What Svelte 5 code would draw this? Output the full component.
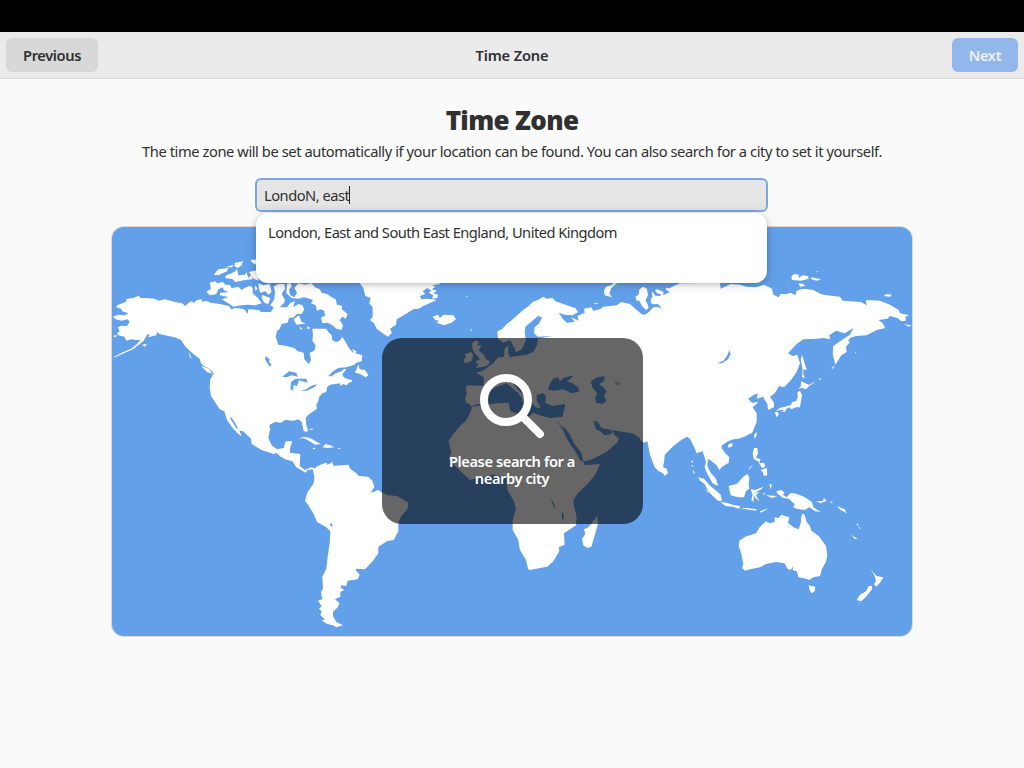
<script>
  let query = $state('LondoN, east');
  const results = ['London, East and South East England, United Kingdom'];

  // Coastlines, grouped by map sheet. Each sheet has its own origin at three units per pixel.
  const sheets = [
    {
      x: -7, y: -7,
      land: [
        'M26 411L50 398 78 386 96 372 106 360 96 360 78 358 64 362 58 350 40 346 36 340 44 334 38 322 50 317 66 318 74 306 68 298 50 302 32 298 24 290 40 284 60 286 70 280 52 274 48 266 34 262 36 256 52 250 62 246 66 236 86 234 100 227 108 234 124 234 150 236 160 242 180 238 210 246 232 250 240 258 254 246 262 244 264 250 276 240 290 238 292 246 302 242 318 248 344 252 372 258 378 268 392 264 412 266 420 270 428 282 430 268 462 270 468 276 498 276 506 262 496 256 508 238 510 214 506 200 520 192 538 192 540 206 530 222 540 240 538 248 524 262 546 262 556 248 570 244 564 262 580 252 592 256 598 268 590 282 576 282 566 292 552 294 548 308 530 312 524 326 516 334 512 350 520 374 544 378 568 384 578 394 596 398 598 418 612 432 618 420 614 398 628 392 632 376 622 362 624 346 622 326 640 326 664 326 670 336 680 346 682 360 692 366 704 362 712 350 724 370 732 384 744 398 760 402 772 406 770 424 754 428 748 434 724 442 700 444 684 454 668 470 690 458 712 448 724 448 712 462 716 472 730 478 740 480 740 486 718 490 706 498 704 490 676 494 666 502 664 516 652 520 642 532 640 544 634 554 636 566 610 584 602 594 604 616 610 632 596 632 590 606 580 598 564 602 540 600 528 608 510 606 494 614 492 632 402 632 392 612 378 590 376 596 386 612 398 632 390 632 380 620 366 600 358 574 344 568 330 546 318 528 314 500 316 478 326 460 314 446 296 438 288 430 284 416 270 406 254 392 240 378 228 360 210 352 190 348 164 342 156 336 154 346 130 352 134 342 126 344 116 362 104 372 84 388 60 398 30 412Z',
        'M314 188L330 184 338 190 354 186 360 194 366 196 340 208 334 222 316 226 304 216 318 206Z',
        'M350 193L375 195 380 205 400 200 410 210 420 203 435 197 443 203 443 220 460 235 470 250 450 256 430 254 410 256 385 260 370 250 350 238 370 231 344 226 346 218 370 217 356 210Z',
        'M326 164L340 148 370 144 366 154 340 166ZM362 142L384 134 382 142ZM390 128L414 124 410 136 398 144 388 138ZM364 166L388 156 396 148 400 166 420 164 424 156 430 174 440 164 442 178 420 180 390 186 384 178 360 174ZM436 120L456 118 456 134 444 130ZM432 156L460 150 460 182 446 176Z',
        'M460 190L474 196 494 192 500 216 490 224 482 214 466 218 462 206ZM450 196L458 206 450 212ZM470 224L496 234 490 252 478 248 472 238Z',
        'M546 192L556 188 560 198 552 210 556 226 568 232 576 218 568 204 580 190 600 194 620 190 630 202 644 208 650 218 666 222 680 232 692 238 696 254 712 258 710 268 728 282 722 296 712 290 704 300 714 316 710 330 694 326 682 316 668 308 652 310 648 292 660 288 658 272 646 268 636 272 632 256 618 250 624 240 606 234 596 232 580 236 560 234 544 220Z',
        'M566 298L582 286 590 306 604 312 590 312 574 314ZM640 254L648 260 640 264ZM584 318L592 328 586 328ZM606 318L616 324 608 328ZM760 432L764 448 780 450 790 466 782 472 766 462 750 458 756 444ZM704 488L728 482 742 480 724 496ZM742 386L756 396 746 400ZM288 438L312 446 322 462 306 456ZM252 396L260 416 254 410ZM110 374L126 372 120 380ZM24 348L36 344 32 352ZM612 626L628 626 618 630Z'
      ],
      water: [
        'M532 470L552 454 574 458 578 470 560 466 544 472ZM558 486L572 476 604 476 608 488 592 484 582 480 576 498 566 496 564 512 556 508ZM588 512L604 508 618 498 636 492 630 500 606 512ZM482 408L494 418 492 426 500 434 494 440 480 418ZM674 466L690 454 716 446 710 454 692 460 678 470ZM680 332L706 330 708 344 692 362 682 356Z'
      ]
    },
    {
      x: -7, y: 203,
      land: [
        'M400 -6L414 4 438 26 440 42 470 60 506 72 514 68 524 78 540 88 562 94 574 112 588 120 602 128 608 120 622 118 628 130 636 116 618 112 600 120 584 108 586 72 554 68 556 52 562 34 542 34 536 54 516 58 500 46 490 24 496 -6ZM388 -6L396 8 410 20 404 4 396 -6ZM594 -6L600 6 608 4 606 -6Z',
        'M624 122L634 110 646 104 664 98 668 104 682 96 686 108 712 106 730 104 736 116 752 128 762 138 790 140 802 152 808 172 796 188 820 180 832 188 850 196 876 198 896 210 910 218 908 236 894 252 884 266 880 284 880 304 866 330 846 334 820 350 820 370 804 392 780 418 754 416 752 420 764 434 758 448 728 452 724 468 708 466 708 474 718 480 706 486 706 500 690 508 704 520 698 532 684 546 684 558 694 576 714 586 694 592 684 586 668 582 650 572 660 568 646 556 650 544 642 536 650 528 638 512 652 508 648 486 654 476 652 440 664 416 668 380 674 340 676 304 664 292 636 276 626 252 610 226 600 212 606 190 626 160 628 140Z',
        'M580 28L596 20 616 24 632 34 648 42 630 44 614 34 596 24ZM652 52L662 42 676 46 688 52 670 54ZM622 54L632 54 628 58ZM698 54L706 54 704 58Z'
      ],
      water: ['M674 282L680 280 684 290 678 288ZM802 186L812 176 810 184Z']
    },
    {
      x: 258, y: 43,
      land: [
        'M-38 30L-20 54 -14 78 2 84 -2 100 8 112 8 140 0 150 12 160 20 176 36 188 54 200 66 188 60 176 78 164 80 148 104 134 130 118 146 116 160 108 200 90 186 88 168 86 154 88 150 78 166 72 158 64 172 54 184 62 176 68 190 76 186 86 202 84 204 74 190 70 200 62 186 58 196 50 186 46 212 42 190 30Z',
        'M188 140L204 134 210 144 220 134 250 136 258 148 244 158 222 166 200 158 208 152 196 150Z',
        'M384 206L382 184 396 178 410 162 426 150 446 132 462 118 476 108 488 96 504 90 520 80 530 86 548 84 556 94 590 106 616 114 624 126 608 136 584 134 566 128 578 146 590 158 614 156 604 142 626 152 622 138 644 128 642 116 664 112 670 122 690 118 700 110 740 106 754 96 780 102 796 116 810 128 826 132 828 120 816 108 808 92 800 92 796 80 806 74 808 58 820 50 832 58 834 76 826 92 840 110 850 118 852 100 862 88 846 76 844 58 880 50 880 610 864 602 852 584 842 552 834 512 822 516 806 502 788 490 760 486 726 480 734 496 748 506 740 520 712 544 690 556 662 570 640 574 644 586 690 582 676 614 650 644 624 670 610 690 612 710 620 740 618 766 600 778 582 790 584 824 566 832 568 844 550 874 532 890 510 894 480 900 474 896 468 870 450 840 444 808 428 780 428 750 438 716 430 690 412 660 410 622 392 618 370 614 330 622 300 630 268 600 248 580 236 566 244 550 236 514 250 492 270 468 288 452 300 430 306 412 300 402 288 398 286 384 290 370 288 350 296 346 340 348 342 322 318 308 340 302 354 290 370 280 384 262 402 262 404 236 416 226 414 250 420 262 440 258 470 254 490 246 500 228 504 206 546 198 504 200 492 190 494 172 508 160 516 142 504 138 490 150 466 170 464 190 468 210 456 238 438 246 430 228 420 210 400 218Z',
        'M306 220L316 212 328 216 322 226 334 226 326 242 340 252 348 268 360 274 354 286 340 290 316 294 326 284 316 276 330 266 314 250 308 238ZM284 252L304 246 310 256 304 274 286 280 280 270 288 262ZM740 30L724 46 708 50 702 62 704 76 726 82 718 70 724 54 742 38ZM668 102L682 98 684 102ZM655 772L682 738 684 762 670 810 664 830 652 834 640 826 636 806 646 792 642 778ZM288 78L294 80 290 82ZM300 180L304 178 306 184Z'
      ],
      water: [
        'M308 406L330 402 348 392 356 368 376 352 398 344 410 340 424 352 444 368 456 384 456 396 468 384 440 354 430 342 440 338 468 364 482 392 496 412 512 414 500 392 500 374 520 370 528 378 526 398 548 408 586 402 578 440 540 444 516 438 490 428 474 442 450 434 420 422 416 398 380 400 340 406 308 410Z',
        'M534 360L540 340 550 326 564 322 570 334 580 324 610 316 600 328 590 334 608 340 624 352 628 364 606 370 592 364 578 358 554 362Z',
        'M662 336L676 324 702 318 704 332 688 342 700 352 710 364 702 376 710 394 696 402 678 398 676 382 682 370 668 354ZM738 332L744 346 736 342ZM746 332L750 342 746 344Z',
        'M562 452L572 466 586 476 600 494 612 520 634 548 640 576 630 570 616 544 602 524 590 504 578 478 564 458Z',
        'M670 452L684 456 694 474 724 480 726 492 704 496 690 484 678 478ZM544 684L550 700 558 716 552 712 546 700ZM576 722L582 738 580 752 576 744Z'
      ]
    },
    {
      x: 528, y: -7,
      land: [
        'M36 196L46 212 70 226 88 216 64 206 90 204 118 190 240 188 242 206 272 192 300 194 320 200 348 202 372 194 396 206 400 224 416 232 422 222 440 222 452 218 466 226 470 212 490 206 520 210 542 222 560 226 600 230 608 242 662 246 680 256 678 240 720 242 750 254 776 270 780 280 808 286 796 290 798 302 784 304 772 294 750 288 742 296 716 300 728 310 736 324 710 330 680 346 648 348 630 354 624 364 630 366 618 380 620 396 604 406 586 434 578 402 580 378 600 364 630 344 640 324 614 340 588 332 568 346 570 358 550 354 530 356 490 358 470 372 444 400 458 408 472 404 480 430 470 456 450 484 432 502 418 498 404 520 390 530 402 548 402 562 384 570 382 552 374 540 370 530 350 536 354 520 340 526 324 536 336 548 356 546 338 562 350 580 350 606 336 640 10 640 0 620 0 284 18 284 32 266 54 262 60 268 58 254 34 254 30 240 38 230 34 214Z',
        'M486 404L494 430 500 450 490 448 490 466 496 474 486 472 488 448 482 420ZM474 506L482 500 484 484 496 490 510 496 498 508 486 504ZM480 512L486 526 482 548 480 562 468 562 454 568 448 562 434 570 420 570 408 574 418 564 436 560 454 554 456 546 468 544 474 530 472 518ZM404 576L414 576 416 584 410 592ZM424 574L440 568 434 576Z',
        'M454 170L462 162 476 164 476 174 488 166 504 168 506 176 484 182 456 180ZM514 172L544 178 530 182 514 178ZM476 190L490 192 496 198 480 200ZM730 228L740 222 756 224 750 230ZM792 312L814 316 806 320ZM528 154L536 154 532 156ZM440 188L446 188 444 190ZM508 494L526 484 512 496ZM536 478L546 472 540 480ZM574 444L586 434 578 446ZM646 394L650 402 646 400Z'
      ],
      water: [
        'M232 430L250 422 262 406 268 390 272 402 264 418 246 430Z',
        'M22 187L120 187 114 192 78 200 76 208 90 218 66 214 52 208 44 210 52 220 66 224 56 229 44 226 38 214 34 226 32 248 38 253 54 252 66 266 54 262 40 260 34 268 24 278 14 284 0 282 14 274 26 264 22 250 25 225 20 200Z'
      ]
    },
    {
      x: 528, y: 203,
      land: [
        'M0 -6L340 -6 332 10 318 18 296 26 280 28 264 34 246 46 244 54 256 70 268 82 266 98 246 110 238 120 230 106 210 90 204 86 202 108 212 128 228 146 234 168 218 160 204 136 194 112 198 96 188 64 170 70 162 50 150 26 140 20 124 30 100 48 74 74 72 98 56 122 44 112 30 74 22 34 12 38 0 30Z',
        'M70 112L80 116 84 130 74 138 68 128ZM264 44L276 38 278 48 266 54ZM342 14L350 6 350 18 344 26Z',
        'M174 142L192 146 208 166 226 180 242 194 246 214 234 212 218 198 204 182 194 162 180 152ZM242 216L260 218 278 224 300 228 298 236 278 230 256 228ZM266 168L290 162 310 140 322 132 328 142 326 162 328 176 318 184 312 202 294 202 272 196ZM302 234L320 234 350 238 348 242 318 238ZM360 244L386 234 374 242 362 248Z',
        'M342 54L352 54 354 70 348 84 362 88 358 96 342 88 338 72ZM362 120L380 114 382 136 372 138 368 126ZM354 92L362 100 372 98 376 110 366 114 360 104ZM322 120L340 102 332 114ZM332 178L346 180 370 170 364 178 344 188 358 186 348 196 358 214 346 204 342 196 340 216 334 210 338 194ZM388 162L396 164 392 178 390 172ZM378 196L412 198 396 204ZM368 190L378 190 372 194Z',
        'M408 184L424 180 434 188 428 194 440 202 450 190 464 190 492 200 516 216 520 232 542 246 526 244 508 232 494 240 470 236 460 232 464 222 446 206 430 204 414 192ZM528 214L548 214 552 204 560 212 542 220ZM540 192L554 204 550 200ZM570 212L580 220 572 218ZM590 228L614 238 620 250 602 240ZM634 314L654 328 644 326ZM652 280L656 288 650 284ZM656 288L662 300 656 294ZM154 92L160 92 156 100ZM154 104L160 108 156 112ZM158 118L166 132 160 128ZM196 176L210 190 202 186Z',
        'M488 250L494 256 500 276 510 288 514 302 536 318 558 348 562 374 558 396 546 416 540 438 520 442 508 450 498 446 476 442 470 424 458 420 460 408 452 420 442 416 434 400 408 396 378 402 360 412 330 418 316 422 306 414 310 402 304 372 296 348 298 332 316 320 348 310 360 290 378 274 390 280 404 276 404 262 416 264 424 254 448 262 444 278 460 292 476 298 482 280 484 260ZM506 466L526 470 524 484 514 490 508 478ZM692 418L702 430 710 438 730 442 720 458 708 470 702 462 708 454 704 438ZM686 468L696 468 696 478 680 498 664 514 650 510 660 494 678 484ZM656 516L664 518 658 518Z'
      ],
      water: []
    }
  ];
</script>

<div class="screen">
  <div class="topbar"></div>
  <header>
    <button class="btn prev">Previous</button>
    <span class="title">Time Zone</span>
    <button class="btn next">Next</button>
  </header>
  <main>
    <h1>Time Zone</h1>
    <p class="desc">The time zone will be set automatically if your location can be found. You can also search for a city to set it yourself.</p>
    <div class="search">
      <div class="entry"><span>{query}</span><i class="caret"></i></div>
      <div class="popover">
        {#each results as r}
          <div class="result"><span>{r}</span></div>
        {/each}
      </div>
    </div>
    <div class="map">
      <svg class="world" viewBox="0 0 800 409" width="800" height="409">
        {#each sheets as s}
          <g transform="translate({s.x} {s.y}) scale(0.333333)">
            {#each s.land as d}<path class="land" {d} />{/each}
            {#each s.water as d}<path class="water" {d} />{/each}
          </g>
        {/each}
      </svg>
      <div class="hint">
        <svg width="66" height="66" viewBox="0 0 66 66">
          <circle cx="27" cy="27" r="22" />
          <path d="M44 44L61 61" />
        </svg>
        <div class="line">Please search for a</div>
        <div class="line">nearby city</div>
      </div>
    </div>
  </main>
</div>

<style>
  :global(body) { margin: 0; background: #fafafa; }
  .screen {
    width: 1024px; height: 768px; overflow: hidden; background: #fafafa;
    color: #303030; font-family: "Noto Sans", "Open Sans", sans-serif; font-size: 14.67px;
    display: flex; flex-direction: column;
  }
  .topbar { height: 32px; background: #000; }
  header {
    box-sizing: border-box; height: 47px; padding: 6px; background: #ebebeb;
    border-bottom: 1px solid #d8d8d8; display: grid;
    grid-template-columns: 1fr auto 1fr; align-items: start;
  }
  .btn {
    font: 600 14.67px/34px "Noto Sans", sans-serif; height: 34px; border: 0; padding: 0;
    border-radius: 6px; color: #303030; letter-spacing: -0.4px;
  }
  .prev { width: 92px; background: #d8d8d8; }
  .next { width: 66px; background: #92b7ea; color: #ecf1f8; justify-self: end; }
  .title { font-weight: 600; font-size: 14.67px; line-height: 34px; letter-spacing: -0.15px; }
  main { display: flex; flex-direction: column; align-items: center; }
  h1 { margin: 25px 0 0; font-size: 26px; line-height: 32px; font-weight: 900; letter-spacing: -0.65px; }
  .desc { margin: 5px 0 0; line-height: 20px; white-space: nowrap; letter-spacing: -0.417px; }
  .search { position: relative; margin-top: 17px; margin-right: 1px; width: 513px; height: 34px; z-index: 2; }
  .entry {
    box-sizing: border-box; height: 34px; border: 2px solid #7ba7e0; border-radius: 6px;
    background: linear-gradient(#e5e5e5 80%, #dedede); padding-left: 7px; display: flex; align-items: center; letter-spacing: -0.48px;
  }
  .caret { width: 1px; height: 18px; background: #202020; }
  .popover {
    position: absolute; left: 1px; top: 35px; width: 511px; height: 70px; box-sizing: border-box;
    padding: 9px 12px; background: #fff; border-radius: 12px;
    box-shadow: 0 1px 5px rgba(0, 0, 0, .22), 0 3px 14px rgba(0, 0, 0, .1);
  }
  .result { line-height: 20px; white-space: nowrap; letter-spacing: -0.53px; }
  .map {
    margin-top: 15px; width: 800px; height: 409px; border-radius: 12px; background: #62a0ea;
    box-shadow: 0 0 0 1px #d9d9d9; display: grid; place-items: center; overflow: hidden;
  }
  .world, .hint { grid-area: 1 / 1; }
  .world { display: block; }
  .land { fill: #fff; }
  .water { fill: #62a0ea; }
  .hint {
    z-index: 1; width: 261px; height: 186px; box-sizing: border-box; border-radius: 20px;
    background: rgba(0, 0, 0, .6); padding: 35px 1px 0 0; display: flex; flex-direction: column; align-items: center;
    margin: 0 0 1px 1px; color: #fff;
  }
  .hint svg { display: block; margin-bottom: 14px; fill: none; stroke: #fff; stroke-width: 8; stroke-linecap: round; }
  .line { font-weight: 600; font-size: 14.67px; line-height: 17px; letter-spacing: -0.43px; }
</style>
